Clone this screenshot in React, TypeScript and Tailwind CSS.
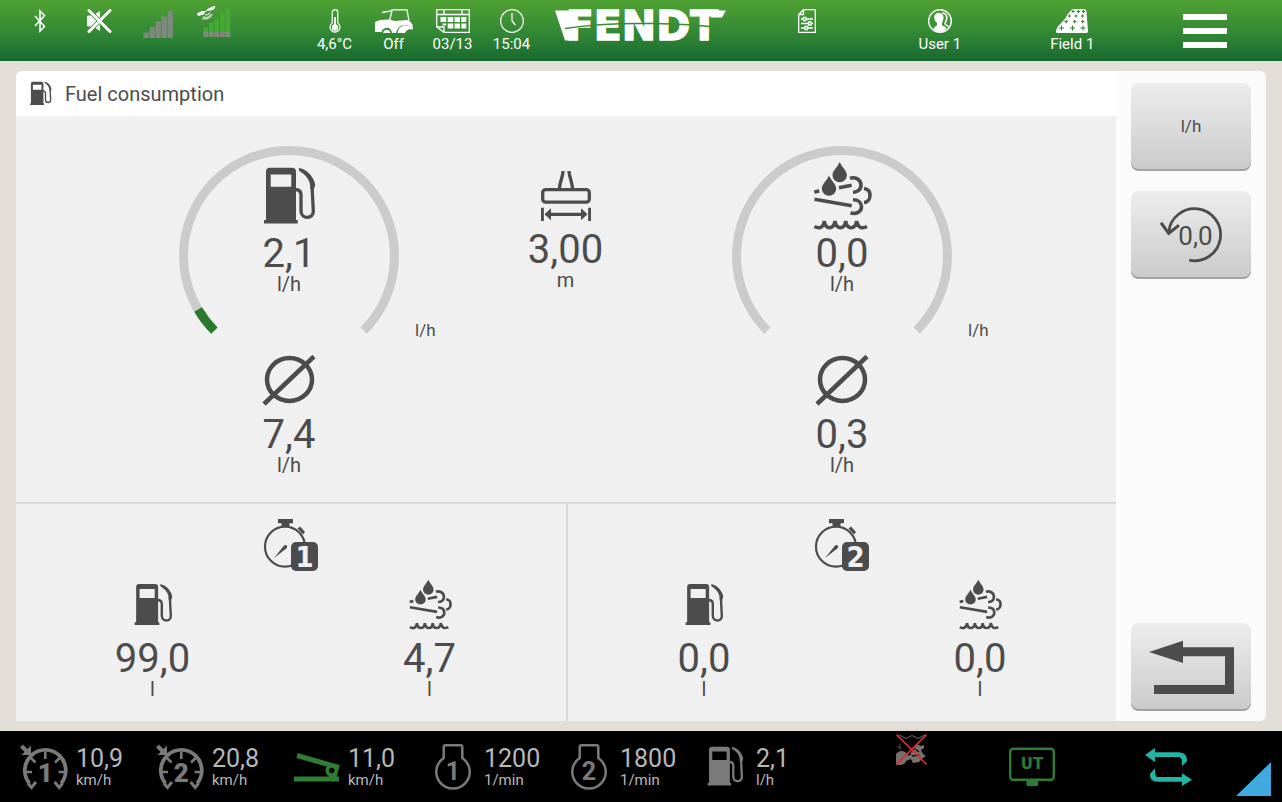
import type { ReactNode } from 'react';

interface IconProps {
  className?: string;
}

function FuelIcon({ className }: IconProps) {
  return (
    <svg viewBox="0 0 60 72" className={className} fill="none" aria-hidden="true">
      <path
        fill="currentColor"
        fillRule="evenodd"
        d="M11 6.7h22a4 4 0 0 1 4 4V59h1.7v3.5H5V59h2V10.700a4 4 0 0 1 4-4zM11.700 13.500v12.300h20.600V13.500z"
      />
      <path d="M36 28.500c4 0 6 2 6 5.500v16c0 8.500 12.800 8.500 12.300 0L53 25" stroke="currentColor" strokeWidth="3.300" />
      <path d="M40 6.700c8 2 12.500 7 15 13l1.300 4-1.600 5-3.400-1c.5-8-4-13.500-11.300-18z" fill="currentColor" />
    </svg>
  );
}

function AdblueIcon({ className }: IconProps) {
  return (
    <svg viewBox="0 0 60 72" className={className} fill="none" aria-hidden="true">
      <g fill="currentColor">
        <path d="M27.700 1c2 5 7.200 8.500 7.200 13.300a7.200 6.900 0 0 1-14.400 0C20.500 9.500 25.700 6 27.700 1z" />
        <path d="M17 14.500c2 5 7.200 8.500 7.200 13.300a7.200 6.900 0 0 1-14.400 0C9.800 23 15 19.500 17 14.500z" />
      </g>
      <g stroke="currentColor" strokeWidth="3.600">
        <path d="M2.300 31l5-.9M27 26.700l12.700-2.400M2.500 38.300l37.200 6.400" />
        <path d="M38 17.300c5-1.600 11 .9 11 7 0 4.500-3.500 7-8 6.900" />
        <path d="M52 27.500c4 .5 6 3.200 6 6.700 0 4-2.600 7-6 7.300" />
        <path d="M41 38.800c5.500 0 8.500 3 8.500 7 0 5-5.500 8-11 6" />
        <path d="M2.500 65.500C7 68 11.500 67 12.300 60c.7 9 9.700 9 10.700 0 1 9 10 9 10.700 0 .7 9 10 9 11 0C46 67 50 68 55 65.500" />
      </g>
    </svg>
  );
}

function WidthIcon() {
  return (
    <svg viewBox="0 0 50 50" className="size-[50px]" fill="none" stroke="currentColor" strokeWidth="3.300" aria-hidden="true">
      <path d="M22 0c0 6-3 10-3.500 17M28 0c0 6 3 10 3.500 17" />
      <rect x="1.700" y="18.600" width="46.600" height="12.600" rx="3" />
      <path d="M1.200 36.700V50M48.800 36.700V50M8 43.300h34" />
      <path d="M3.500 43.300l6.500-6v12zM46.500 43.300l-6.500-6v12z" fill="currentColor" stroke="none" />
    </svg>
  );
}

function AverageIcon() {
  return (
    <svg viewBox="0 0 54 52" className="h-[52px] w-[54px]" fill="none" stroke="currentColor" strokeWidth="4.500" aria-hidden="true">
      <ellipse cx="27.500" cy="25.500" rx="22.500" ry="21.500" />
      <path d="M2 50L52 2.500" />
    </svg>
  );
}

function StopwatchIcon({ digit }: { digit: number }) {
  return (
    <svg viewBox="0 0 54 52" className="h-[52px] w-[54px] overflow-visible" aria-hidden="true">
      <circle cx="21" cy="27.700" r="20" fill="none" stroke="currentColor" strokeWidth="2.200" />
      <path d="M14 0h15v4.300h-3.500V8h-8V4.300H14zM33.500 9.500l2.500-2 5 5.500-2 2.500zM23 26.500l-2.500-.5L10 39l13-10z" fill="currentColor" />
      <rect x="27" y="23" width="27" height="29" rx="5" fill="currentColor" />
      <text x="40.500" y="48" textAnchor="middle" fill="#f0f0f0" className="font-['DejaVu_Sans_Condensed','DejaVu_Sans'] text-[29px] font-bold">
        {digit}
      </text>
    </svg>
  );
}

function BluetoothIcon() {
  return (
    <svg viewBox="0 0 12 24" className="h-6 w-3" fill="none" stroke="currentColor" strokeWidth="1.600" aria-hidden="true">
      <path d="M1 7l9.500 10.500L6 22V2l4.500 4.500L1 17" />
    </svg>
  );
}

function MuteIcon() {
  return (
    <svg viewBox="0 0 26 24" className="h-6 w-[26px]" fill="currentColor" aria-hidden="true">
      <path d="M2.500 6.500H7L14 2v20l-7-4.500H2.500A1.500 1.500 0 0 1 1 16V8a1.500 1.500 0 0 1 1.500-1.500z" />
      <path d="M3 1.500l21 21M24 1.500l-21 21" stroke="#3a8a33" strokeWidth="4.500" />
      <path d="M3 1.500l21 21M24 1.500l-21 21" stroke="currentColor" strokeWidth="3" strokeLinecap="round" />
    </svg>
  );
}

function SignalIcon() {
  return (
    <svg viewBox="0 0 30 24" className="h-6 w-[30px] overflow-visible" fill="#7f8a7f" aria-hidden="true">
      <path d="M.5 23.500h5.300V29H.5zM6.500 18h5.300v11H6.500zM12.500 12.500h5.300V29h-5.300zM18.500 7.500h5.300V29h-5.300zM24.500 2h5.300v27h-5.300z" />
    </svg>
  );
}

function GpsIcon() {
  return (
    <svg viewBox="4 0 36 24" className="h-6 w-9 overflow-visible" aria-hidden="true">
      <path d="M8.500 18.500h4.700V28H8.500zM14 13.700h4.700V28H14zM19.500 9.300h4.700V28h-4.700zM25 4.300h4.700V28H25zM30.500-.3h4.700V28h-4.700z" fill="#43aa32" />
      <path d="M8.500 23h4.700v5H8.500zM14 23h4.700v5H14zM19.500 23h4.700v5h-4.700zM25 23h4.700v5H25zM30.500 23h4.700v5h-4.700z" fill="#7f8a7f" />
      <path d="M2 4.500l5-2.500 3 .5-1 3-6 1.500zM13-.5l6-2.500h1.500L19 .5l-5 1.500-2-1z" fill="#fff" />
      <path d="M9 3l4-2M8 7.500c3 2 7 .5 8-2.500M10 5.500c2 1 4 0 5-2M7 9.500c5 1.500 9-1 10.500-4" fill="none" stroke="#fff" strokeWidth="1" />
    </svg>
  );
}

function ThermometerIcon() {
  return (
    <svg viewBox="0 0 12 24" className="h-6 w-3" fill="none" stroke="currentColor" strokeWidth="1.200" aria-hidden="true">
      <path d="M3.200 14V3.500a2.800 2.800 0 0 1 5.600 0V14a5 5 0 1 1-5.600 0z" />
      <path d="M6 8v8" strokeWidth="1.800" />
      <circle cx="6" cy="18.500" r="3.200" fill="currentColor" stroke="none" />
    </svg>
  );
}

function TractorIcon() {
  return (
    <svg viewBox="0 0 38 24" className="h-6 w-[38px]" fill="none" stroke="currentColor" aria-hidden="true">
      <path d="M7 3.500l9-1.500 1-1.200h15l2 11M17 1.500L14.500 12" strokeWidth="1.300" />
      <path
        d="M0 13l5-2 9-.5 6 1.500 12-1c3 1 5 3 6 6l-1 1c-8-4.500-14.500-.5-16 6h-4c-.5-6-8-7.500-10.500-1L0 23z"
        fill="currentColor"
        stroke="none"
      />
      <path d="M22.500 24c1-7.500 8.500-10 15.500-5.500v2c-4-1-6.500 0-8 3.500zM8 24c1-4 6.500-4.500 7.500 0z" fill="currentColor" stroke="none" />
    </svg>
  );
}

function CalendarIcon() {
  return (
    <svg viewBox="0 0 34 24" className="h-6 w-[34px]" fill="none" stroke="currentColor" strokeWidth="1.300" aria-hidden="true">
      <path d="M.7.700h32.600v22.600H8L.7 18zM.7 5.500h32.600M8 .7v4.800M26 .7v4.800M8 23v-5H1" />
      <path
        d="M4.500 8h5.700v5H4.500zM11.700 8h5.500v5h-5.500zM18.500 8H24v5h-5.500zM25.300 8h5v5h-5zM6.500 14.500h3.700v2H6.500zM11.700 14.500h5.500v5h-5.500zM18.500 14.500H24v5h-5.500zM25.300 14.500h5v5h-5z"
        fill="currentColor"
        stroke="none"
      />
    </svg>
  );
}

function ClockIcon() {
  return (
    <svg viewBox="0 0 24 24" className="size-6" fill="none" stroke="currentColor" strokeWidth="1.200" aria-hidden="true">
      <circle cx="12" cy="12" r="11.300" />
      <path d="M12 4v8l3.500 4" />
    </svg>
  );
}

function TaskIcon() {
  return (
    <svg viewBox="0 0 18 24" className="h-6 w-[18px]" fill="none" stroke="currentColor" strokeWidth="1.300" aria-hidden="true">
      <path d="M5.500.700h11.800v22.600H.7V5.500zM5.500.700v4.800H.7M3 10h12M3 14.500h12M3 19h12" />
      <path d="M5.500 8.500h2.500v3H5.500zM10.500 13H13v3h-2.500zM7 17.500h2.500v3H7z" fill="#2f8534" />
    </svg>
  );
}

function UserIcon() {
  return (
    <svg viewBox="0 0 24 24" className="size-6" fill="none" aria-hidden="true">
      <circle cx="12" cy="12" r="11.300" stroke="currentColor" strokeWidth="1.400" />
      <path
        d="M11 4c3.500 0 4.800 2.500 4.500 5.500-.2 2-1 3-1.500 4.500v2c1 1.500 4 1.500 4.500 3.500-3.500 4.500-10 4.500-13 0 .5-2 3-2 3.500-3.500v-2C7.500 12.500 6.500 11.500 6.300 9 6 6 7.500 4 11 4z"
        fill="currentColor"
      />
      <path d="M14 4c3-.3 5 2 4.800 5-.2 2.500-1.300 4-1.800 5.500 0 2 2 1.500 3.500 3" stroke="currentColor" strokeWidth="1.600" />
    </svg>
  );
}

function FieldIcon() {
  return (
    <svg viewBox="0 0 32 24" className="h-6 w-8" aria-hidden="true">
      <path d="M17 0h10c2.500 0 3.300 1 3.500 3L32 22c0 1.500-.5 2-2 2H1.500C0 24-.3 22.500.3 21 2 16 5 14.500 8 11c3-3.500 4-8 9-11z" fill="currentColor" />
      <path
        d="M15.500 2.500h3M17 1v3M21 2.500h3M22.500 1v3M26 2.500h3M27.500 1v3M12 7h3M13.500 5.500v3M18.500 7h3M20 5.500v3M25 7h3M26.500 5.500v3M8.500 12.500H12M10.200 11v3.500M17 12.500h3.500M18.700 11v3.500M25 12.500h3.500M26.700 11v3.500M3 19h5M5.500 16.500v5M14 19h5M16.500 16.500v5M24.500 19h5M27 16.500v5"
        stroke="#2c8234"
        strokeWidth="1"
      />
    </svg>
  );
}

function FendtLogo() {
  return (
    <svg viewBox="0 0 176 36" className="h-9 w-[176px] overflow-visible" role="img" aria-label="FENDT">
      <text x="89" y="32" textAnchor="middle" fill="#fff" stroke="#fff" strokeWidth="1.500" className="font-['DejaVu_Sans'] text-[41px] font-bold">
        FENDT
      </text>
      {/* swept tips at both ends of the word mark */}
      <path d="M2 2.500h16v30h-6zM158 2.500h15l-4 7h-11z" fill="#fff" />
      <path d="M12 20.500C40 16 70 15 100 15.500s45 1.500 66 4" fill="none" stroke="#3a8a33" strokeWidth="1.500" />
    </svg>
  );
}

function ResetIcon() {
  return (
    <svg viewBox="0 0 62 56" className="h-14 w-[62px]" fill="none" aria-hidden="true">
      <path d="M29.300 53.200A26 26 0 1 0 8.700 25" stroke="currentColor" strokeWidth="2.800" />
      <path d="M1 15.700l7.700 10.600L19 18.300" stroke="currentColor" strokeWidth="3" />
      <text x="35.500" y="38" textAnchor="middle" fill="currentColor" className="font-['Roboto'] text-[26px]">
        0,0
      </text>
    </svg>
  );
}

function BackIcon() {
  return (
    <svg viewBox="0 0 85 54" className="h-[54px] w-[85px]" fill="currentColor" aria-hidden="true">
      <path d="M0 12L34 .7v6.600h51V54H5v-9h71V16.300H34V23z" />
    </svg>
  );
}

function CruiseIcon({ digit }: { digit: number }) {
  return (
    <svg viewBox="0 0 50 46" className="h-[46px] w-[50px]" fill="none" stroke="currentColor" strokeWidth="3.800" aria-hidden="true">
      <path d="M9.500 39.500a20.500 20.500 0 1 1 31.600 0" />
      <path d="M8 39.500l3.500 4 4.500-5.500M42.600 39.500l-3.500 4-4.500-5.500" strokeWidth="3" />
      <path d="M5 28h7M45.600 28h-7M25.300 8v7M11 14l4.500 4.500M39.600 14L35 18.500" strokeWidth="2.600" />
      <path d="M1.500 2l5 5" strokeWidth="4" />
      <path d="M11 1.500V11H1.500z" fill="currentColor" stroke="none" />
      <text x="25.300" y="37.500" textAnchor="middle" fill="currentColor" stroke="none" className="font-['Roboto'] text-[26px] font-black">
        {digit}
      </text>
    </svg>
  );
}

function PedalIcon() {
  return (
    <svg viewBox="0 0 46 30" className="h-[30px] w-[46px] text-[#2f7d34]" fill="none" stroke="currentColor" aria-hidden="true">
      <path d="M3 3.500l42 12M0 27h45" strokeWidth="5" />
      <path d="M45.500 14l-3 11h-8z" fill="currentColor" stroke="none" />
      <circle cx="37.700" cy="18.500" r="4.500" fill="#000" strokeWidth="3.500" />
    </svg>
  );
}

function EngineIcon({ digit }: { digit: number }) {
  return (
    <svg viewBox="0 0 36 46" className="h-[46px] w-9" fill="none" aria-hidden="true">
      <path
        d="M8.700 14V3.300a2 2 0 0 1 2-2h14.600a2 2 0 0 1 2 2V14a16.700 16.700 0 1 1-18.600 0z"
        stroke="currentColor"
        strokeWidth="2.500"
      />
      <text x="18" y="36" textAnchor="middle" fill="currentColor" className="font-['Roboto'] text-[25px] font-bold">
        {digit}
      </text>
    </svg>
  );
}

function ImplementOffIcon() {
  return (
    <svg viewBox="0 0 31 31" className="size-[31px]" fill="none" aria-hidden="true">
      <path d="M1 3q3-3 6 0t6 0 6 0 6 0 5-1" stroke="#70706c" strokeWidth="1" />
      <path d="M0 20c4-5 9-3 12 1l5-4 4-7 4 2 3-1v3l-3 2 2 4 3 2-3 2-4 4-6 1-2-4-5 2c-1 4-5 4-9 4l-3-3z" fill="#77706c" />
      <path d="M19 15l4 3M16 22l7-1M12 21l3-1" stroke="#111" strokeWidth="1.500" />
      <path d="M1 12l3 2M4 10v6" stroke="#55504d" strokeWidth="1" />
      <path d="M.5.500l30 30M30.500.500l-30 30" stroke="#e8262a" strokeWidth="1.600" />
    </svg>
  );
}

function UtIcon() {
  return (
    <svg viewBox="0 0 46 40" className="h-10 w-[46px] text-[#2f7d34]" fill="none" aria-hidden="true">
      <rect x="1.200" y="1.700" width="43.600" height="31" rx="3" stroke="currentColor" strokeWidth="2.400" />
      <path d="M17.500 33H29v6H17.500z" fill="currentColor" />
      <text x="23" y="22" textAnchor="middle" fill="currentColor" className="font-['DejaVu_Sans'] text-[15px] font-bold">
        UT
      </text>
    </svg>
  );
}

function SwapIcon() {
  return (
    <svg viewBox="0 0 47 38" className="h-[38px] w-[47px] text-[#21b5a6]" fill="currentColor" aria-hidden="true">
      <path d="M0 7l10-7v4.300h23c7 0 9 3.700 9 8.700l-5 5.300C37 13 38 9 32 9H10v5z" />
      <path d="M47 31.700l-10-6.400V29H13c-2 0-3-1-3-8.700L5 26c0 5 2 7.700 8 7.700h24V38z" />
    </svg>
  );
}

interface ReadingProps {
  value: string;
  unit: string;
}

function Reading({ value, unit }: ReadingProps) {
  return (
    <div className="text-center">
      <p className="text-[40px] leading-[42px]">{value}</p>
      <p className="text-[20px] leading-[18px]">{unit}</p>
    </div>
  );
}

interface GaugeProps extends ReadingProps {
  icon: ReactNode;
  average: string;
  progress: number;
}

// 270 degree dial, radius 105.5; progress goes from 0 to 1
function Gauge({ icon, value, unit, average, progress }: GaugeProps) {
  const arc = 'M35.400 184.600A105.500 105.500 0 1 1 184.600 184.600';
  return (
    <div className="flex w-[292px] flex-col items-center">
      <div className="grid w-full grid-cols-[36px_220px_36px] items-end">
        <div className="relative col-start-2 flex h-[194px] flex-col items-center pt-[15px]">
          <svg viewBox="0 0 220 190" className="absolute inset-x-0 top-0 h-[190px] w-[220px]" fill="none" strokeWidth="9" aria-hidden="true">
            <path d={arc} stroke="#cbcbcb" />
            {progress > 0 && <path d={arc} stroke="#2a7a2e" pathLength={1} strokeDasharray={`${progress} 2`} />}
          </svg>
          {icon}
          <Reading value={value} unit={unit} />
        </div>
        <span className="pl-4 text-[17px] leading-[20px]">{unit}</span>
      </div>
      <div className="mt-[14px] flex flex-col items-center gap-2">
        <AverageIcon />
        <Reading value={average} unit={unit} />
      </div>
    </div>
  );
}

interface CounterProps {
  digit: number;
  fuel: string;
  adblue: string;
  className?: string;
}

function Counter({ digit, fuel, adblue, className = '' }: CounterProps) {
  return (
    <section className={`flex flex-col items-center gap-2 pt-[15px] ${className}`}>
      <StopwatchIcon digit={digit} />
      <div className="grid w-full grid-cols-2 gap-1">
        <div className="flex flex-col items-center gap-[6px]">
          <FuelIcon className="h-[53px] w-11" />
          <Reading value={fuel} unit="l" />
        </div>
        <div className="flex flex-col items-center gap-[6px]">
          <AdblueIcon className="h-[53px] w-11" />
          <Reading value={adblue} unit="l" />
        </div>
      </div>
    </section>
  );
}

function StatusItem({ icon, label, className = '' }: { icon: ReactNode; label?: string; className?: string }) {
  return (
    <div className={`flex flex-col items-center gap-0.5 pt-[9px] ${className}`}>
      {icon}
      {label && <span className="text-[15px] leading-[18px] whitespace-nowrap">{label}</span>}
    </div>
  );
}

function SideButton({ label, className = '', children }: { label: string; className?: string; children: ReactNode }) {
  return (
    <button
      type="button"
      aria-label={label}
      className={`flex h-[88px] w-full items-center justify-center rounded-lg bg-gradient-to-b from-[#ededed] to-[#cacaca] text-[17px] shadow-[inset_0_-2px_0_#a3a3a3] ${className}`}
    >
      {children}
    </button>
  );
}

const footerItems = [
  { icon: <CruiseIcon digit={1} />, value: '10,9', unit: 'km/h' },
  { icon: <CruiseIcon digit={2} />, value: '20,8', unit: 'km/h' },
  { icon: <PedalIcon />, value: '11,0', unit: 'km/h' },
  { icon: <EngineIcon digit={1} />, value: '1200', unit: '1/min' },
  { icon: <EngineIcon digit={2} />, value: '1800', unit: '1/min' },
  { icon: <FuelIcon className="h-[50px] w-[42px]" />, value: '2,1', unit: 'l/h' },
];

export default function App() {
  return (
    <div className="flex min-h-screen flex-col bg-[#e3dfd8] font-['Roboto',sans-serif] text-[#4c4c4c]">
      <header className="grid h-[61px] grid-cols-[531fr_200fr_530fr] bg-gradient-to-b from-[#50a233] via-[#2f8534] via-60% to-[#17682f] pr-[11px] pl-[10px] text-white">
        <div className="grid grid-cols-9">
          <StatusItem icon={<BluetoothIcon />} />
          <StatusItem icon={<MuteIcon />} />
          <StatusItem icon={<SignalIcon />} />
          <StatusItem icon={<GpsIcon />} />
          <StatusItem icon={<ThermometerIcon />} label="4,6°C" className="col-start-6" />
          <StatusItem icon={<TractorIcon />} label="Off" />
          <StatusItem icon={<CalendarIcon />} label="03/13" />
          <StatusItem icon={<ClockIcon />} label="15:04" />
        </div>
        <div className="flex justify-center pt-2">
          <FendtLogo />
        </div>
        <div className="grid grid-cols-4">
          <StatusItem icon={<TaskIcon />} />
          <StatusItem icon={<UserIcon />} label="User 1" />
          <StatusItem icon={<FieldIcon />} label="Field 1" />
          <button type="button" aria-label="Menu" className="flex flex-col items-center gap-2 pt-[14px]">
            <span className="h-[6px] w-11 bg-white" />
            <span className="h-[6px] w-11 bg-white" />
            <span className="h-[6px] w-11 bg-white" />
          </button>
        </div>
      </header>

      <main className="flex flex-1 px-4 py-[10px]">
        <div className="flex flex-1 flex-col">
          <div className="flex h-[45px] items-center gap-3 rounded-tl-md bg-white pl-3">
            <FuelIcon className="h-8 w-[25px]" />
            <h1 className="text-[20px] leading-[24px]">Fuel consumption</h1>
          </div>

          <div className="flex h-[388px] items-start justify-between border-b-2 border-[#d9d9d9] bg-[#f0f0f0] pt-[30px] pr-32 pl-[127px]">
            <Gauge icon={<FuelIcon className="h-[72px] w-[60px]" />} value="2,1" unit="l/h" average="7,4" progress={0.054} />
            <div className="flex flex-col items-center gap-2 pt-[25px]">
              <WidthIcon />
              <Reading value="3,00" unit="m" />
            </div>
            <Gauge icon={<AdblueIcon className="h-[72px] w-[60px]" />} value="0,0" unit="l/h" average="0,3" progress={0} />
          </div>

          <div className="grid flex-1 grid-cols-2 bg-[#f0f0f0]">
            <Counter digit={1} fuel="99,0" adblue="4,7" />
            <Counter digit={2} fuel="0,0" adblue="0,0" className="border-l-2 border-[#d9d9d9]" />
          </div>
        </div>

        <aside className="flex w-[150px] flex-col gap-5 rounded-r-md bg-[#fbfbfb] px-[15px] pt-3 pb-[10px]">
          <SideButton label="Unit l/h">l/h</SideButton>
          <SideButton label="Reset counters">
            <ResetIcon />
          </SideButton>
          <SideButton label="Back" className="mt-auto">
            <BackIcon />
          </SideButton>
        </aside>
      </main>

      <footer className="relative grid h-[71px] grid-cols-9 bg-black pr-[42px] pl-4">
        {footerItems.map((item, index) => (
          <div key={index} className="flex items-center text-[#7a7a7a]">
            <div className="flex w-[58px] shrink-0 justify-center">{item.icon}</div>
            <div className="pl-0.5 text-[#b8b8b8]">
              <p className="text-[25px] leading-[27px]">{item.value}</p>
              <p className="text-[15px] leading-[16px]">{item.unit}</p>
            </div>
          </div>
        ))}
        <div className="flex items-start justify-center pt-[3px] pl-[22px]">
          <ImplementOffIcon />
        </div>
        <button type="button" aria-label="Universal terminal" className="flex items-center justify-center pr-2">
          <UtIcon />
        </button>
        <button type="button" aria-label="Switch view" className="flex items-center justify-center pr-2">
          <SwapIcon />
        </button>
        <svg viewBox="0 0 35 34" className="absolute right-[11px] bottom-[6px] h-[34px] w-[35px]" aria-hidden="true">
          <path d="M35 0v34H0z" fill="#3fa9e0" />
        </svg>
      </footer>
    </div>
  );
}
